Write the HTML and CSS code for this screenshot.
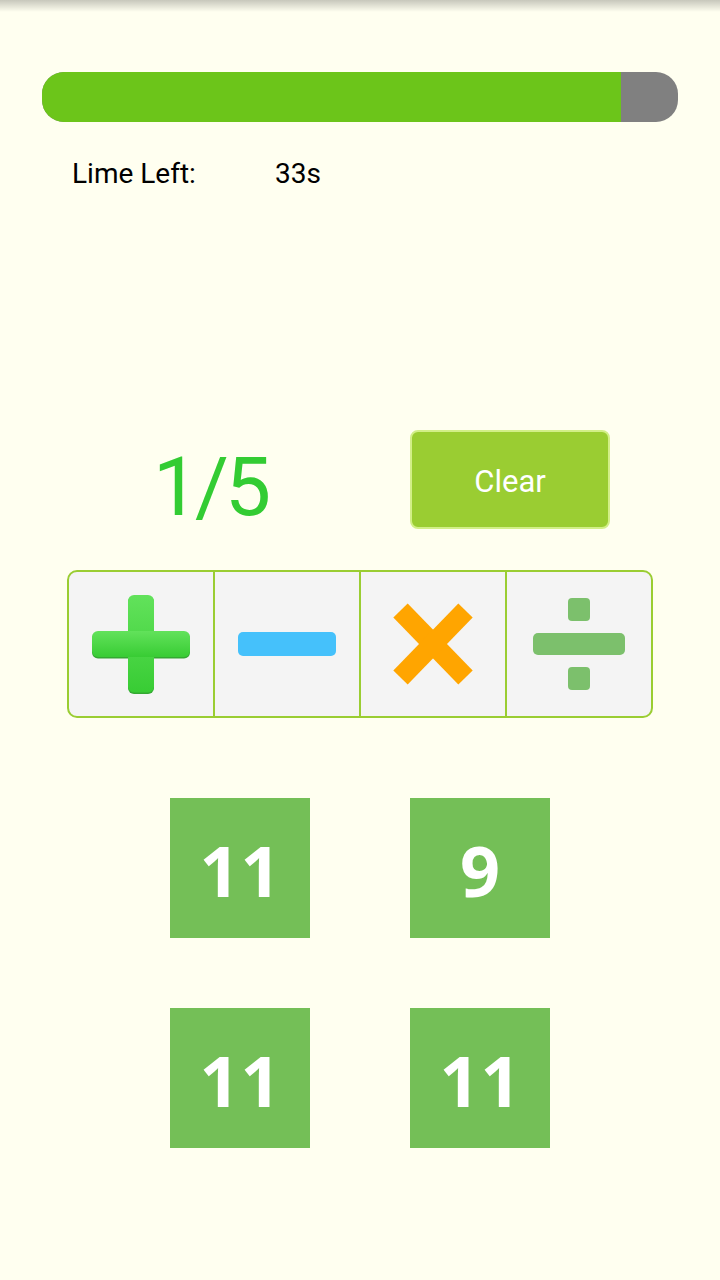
FILE: index.html
```html
<!DOCTYPE html>
<html lang="en">
<head>
<meta charset="utf-8">
<title>Lime Math</title>
<link rel="stylesheet" href="styles.css">
</head>
<body>
  <div class="progress">
    <div class="progress-fill" style="width: 91%"></div>
  </div>
  <div class="timer">
    <span class="timer-label">Lime Left:</span>
    <span class="timer-value">33s</span>
  </div>
  <div class="status-row">
    <div class="score">1/5</div>
    <button class="clear-btn">Clear</button>
  </div>
  <div class="ops">
    <div class="op">
      <svg width="98" height="99" viewBox="0 0 98 99">
        <defs>
          <linearGradient id="pg" x1="0" y1="0" x2="0" y2="1">
            <stop offset="0" stop-color="#62e25b"/>
            <stop offset="1" stop-color="#38cc34"/>
          </linearGradient>
        </defs>
        <g fill="#34a832">
          <rect x="36" y="1" width="26" height="98" rx="6"/>
          <rect x="0" y="37.5" width="98" height="26" rx="6"/>
        </g>
        <g fill="url(#pg)">
          <rect x="36" y="0" width="26" height="97.5" rx="6"/>
          <rect x="0" y="36" width="98" height="26" rx="6"/>
        </g>
      </svg>
    </div>
    <div class="op">
      <svg width="98" height="24" viewBox="0 0 98 24">
        <rect x="0" y="0" width="98" height="24" rx="5" fill="#45c1fb"/>
      </svg>
    </div>
    <div class="op">
      <svg width="80" height="82" viewBox="0 0 80 82">
        <g stroke="#ffa500" stroke-width="20" stroke-linecap="butt">
          <line x1="7.5" y1="7.5" x2="72.5" y2="74.5"/>
          <line x1="72.5" y1="7.5" x2="7.5" y2="74.5"/>
        </g>
      </svg>
    </div>
    <div class="op">
      <svg width="92" height="92" viewBox="0 0 92 92">
        <g fill="#7cc06c">
          <rect x="35" y="0" width="22" height="23" rx="4"/>
          <rect x="0" y="35" width="92" height="22" rx="5"/>
          <rect x="35" y="69" width="22" height="23" rx="4"/>
        </g>
      </svg>
    </div>
  </div>
  <div class="tiles">
    <div class="tile">11</div>
    <div class="tile">9</div>
    <div class="tile">11</div>
    <div class="tile">11</div>
  </div>
</body>
</html>
```

FILE: styles.css
```css
html, body {
  margin: 0;
  padding: 0;
}

body {
  width: 720px;
  height: 1280px;
  overflow: hidden;
  font-family: Roboto, "Liberation Sans", sans-serif;
  background: linear-gradient(rgba(0, 0, 0, 0.22), rgba(0, 0, 0, 0) 12px) no-repeat, #fffff0;
  color: #000;
}

.progress {
  margin: 72px 42px 0;
  height: 50px;
  border-radius: 22px;
  background: #808080;
  overflow: hidden;
  display: flex;
}

.progress-fill {
  height: 100%;
  background: #6cc51a;
}

.timer {
  margin-top: 36px;
  padding-left: 72px;
  display: flex;
  font-size: 28px;
  line-height: 32px;
}

.timer-label {
  width: 203px;
}

.status-row {
  margin-top: 240px;
  padding-left: 72px;
  height: 99px;
  display: flex;
  align-items: flex-start;
}

.score {
  width: 280px;
  margin-top: 16px;
  text-align: center;
  font-size: 82px;
  line-height: 82px;
  letter-spacing: -4px;
  text-indent: -4px;
  color: #33cc33;
}

.clear-btn {
  margin-left: 58px;
  width: 200px;
  height: 99px;
  box-sizing: border-box;
  border: 2px solid #d2ef88;
  border-radius: 8px;
  background: #9acd32;
  color: #fff;
  font-family: Roboto, "Liberation Sans", sans-serif;
  font-size: 31px;
  padding: 3px 0 0;
}

.ops {
  margin: 41px 67px 0;
  height: 148px;
  box-sizing: border-box;
  border: 2px solid #9acd32;
  border-radius: 10px;
  background: #f4f4f4;
  display: flex;
  overflow: hidden;
}

.op {
  flex: 1;
  display: flex;
  align-items: center;
  justify-content: center;
}

.op + .op {
  border-left: 2px solid #9acd32;
}

.op svg {
  display: block;
}

.tiles {
  margin-top: 80px;
  display: grid;
  grid-template-columns: 140px 140px;
  grid-auto-rows: 140px;
  column-gap: 100px;
  row-gap: 70px;
  justify-content: center;
}

.tile {
  background: #74bf57;
  color: #fff;
  font-family: "Open Sans", Roboto, sans-serif;
  font-weight: 700;
  font-size: 70px;
  line-height: 1;
  letter-spacing: 1px;
  text-indent: 1px;
  display: flex;
  align-items: center;
  justify-content: center;
  padding-top: 3px;
  box-sizing: border-box;
}
```
